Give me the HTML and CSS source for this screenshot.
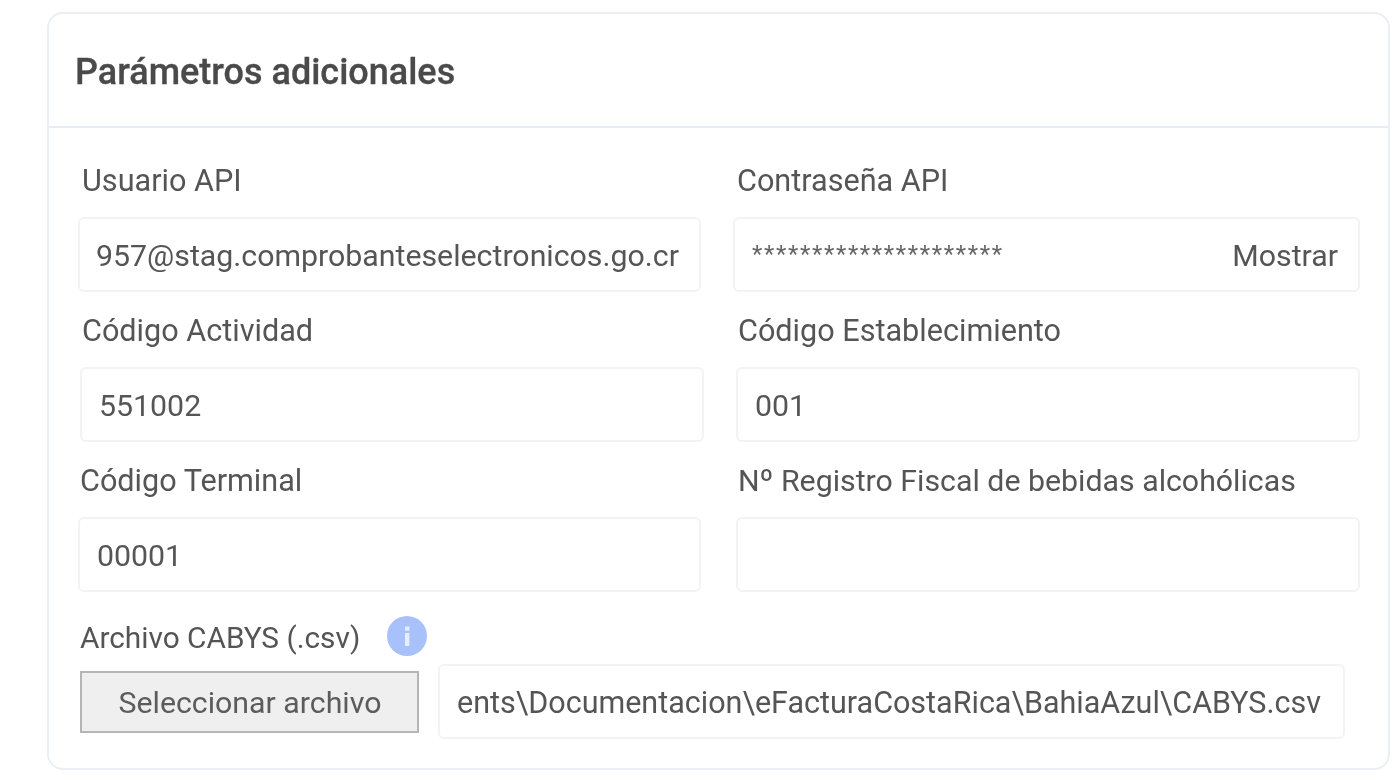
FILE: index.html
```html
<!DOCTYPE html>
<html lang="es">
<head>
<meta charset="utf-8">
<title>Parámetros adicionales</title>
<link rel="stylesheet" href="styles.css">
</head>
<body>
<section class="card">
  <header class="card-header"><h2>Parámetros adicionales</h2></header>
  <div class="card-body">
    <div class="row row-a">
      <div class="field">
        <label class="lbl lbl-in">Usuario API</label>
        <div class="box box-first"><span class="val">957@stag.comprobanteselectronicos.go.cr</span></div>
      </div>
      <div class="field">
        <label class="lbl lbl-in">Contraseña API</label>
        <div class="box box-pass"><span class="stars">*********************</span><span class="show">Mostrar</span></div>
      </div>
    </div>
    <div class="row row-b">
      <div class="field">
        <label class="lbl">Código Actividad</label>
        <div class="box"><span class="val">551002</span></div>
      </div>
      <div class="field">
        <label class="lbl">Código Establecimiento</label>
        <div class="box"><span class="val">001</span></div>
      </div>
    </div>
    <div class="row row-c">
      <div class="field">
        <label class="lbl">Código Terminal</label>
        <div class="box"><span class="val">00001</span></div>
      </div>
      <div class="field">
        <label class="lbl lbl-long">Nº Registro Fiscal de bebidas alcohólicas</label>
        <div class="box"></div>
      </div>
    </div>
    <div class="file-field">
      <div class="file-label">
        <span class="lbl-plain">Archivo CABYS (.csv)</span>
        <svg class="info" viewBox="0 0 40 40" width="40" height="40" aria-hidden="true">
          <circle cx="20" cy="20" r="20" fill="#a9c1fb"/>
          <rect x="18" y="17" width="4.4" height="13" fill="#e6edfe"/>
          <rect x="18" y="10.5" width="4.4" height="4.2" fill="#e6edfe"/>
        </svg>
      </div>
      <div class="file-row">
        <button class="file-btn" type="button">Seleccionar archivo</button>
        <div class="box file-path"><span>ents\Documentacion\eFacturaCostaRica\BahiaAzul\CABYS.csv</span></div>
      </div>
    </div>
  </div>
</section>
</body>
</html>
```
FILE: styles.css
```css
* { box-sizing: border-box; }
html, body { margin: 0; height: 780px; overflow: hidden; background: #fff; }
body {
  padding: 12px 10px 0 47px;
  font-family: Roboto, "Liberation Sans", sans-serif;
  color: #555;
  font-size: 30.3px;
  filter: blur(0.6px);
}
.card {
  height: 758px;
  border: 2px solid #e9eff5;
  border-radius: 16px;
  background: #fff;
}
.card-header {
  height: 114px;
  padding: 0 0 0 26px;
  border-bottom: 2px solid #e6edf4;
  display: flex;
  align-items: center;
}
.card-header h2 {
  margin: 4px 0 0;
  font-size: 36px;
  font-weight: 500;
  color: #4a4a4a;
  -webkit-text-stroke: 0.3px #4a4a4a;
}
.card-body { padding-left: 29px; }
.row { display: grid; height: 150px; }
.row-a { grid-template-columns: 623px 627px; column-gap: 32px; margin-top: 34px; }
.row-b { grid-template-columns: 624px 624px; column-gap: 32px; padding-left: 2px; }
.row-c { grid-template-columns: 623px 624px; column-gap: 35px; }
.field { display: flex; flex-direction: column; }
.lbl { height: 55px; line-height: 38px; padding-left: 2px; white-space: nowrap; font-size: 30.6px; }
.lbl-in { padding-left: 4px; }
.lbl-long { font-size: 30.3px; }
.box {
  height: 75px;
  border: 2px solid #f1f3f5;
  border-radius: 6px;
  background: #fff;
  display: flex;
  align-items: center;
  padding: 1px 17px 0;
  white-space: nowrap;
  overflow: hidden;
}
.box-first { padding-left: 16px; }
.box-pass { justify-content: space-between; padding-right: 20px; }
.stars { font-size: 24px; line-height: 1; letter-spacing: 1.65px; margin-bottom: 2px; color: #666; }
.file-field { padding-left: 2px; }
.lbl-plain { font-size: 29.8px; margin-bottom: 2px; }
.file-label { height: 52px; display: flex; align-items: center; gap: 27px; }
.info { flex: none; margin-bottom: 4px; }
.file-row { display: flex; align-items: center; gap: 19px; height: 75px; }
.file-btn {
  width: 339px;
  height: 62px;
  background: #efefef;
  border: 2px solid #b5b5b5;
  color: #5c5c5c;
  font: inherit;
  padding: 2px 0 0 1px;
}
.file-path { width: 907px; padding-top: 2px; font-size: 30.5px; }
```
